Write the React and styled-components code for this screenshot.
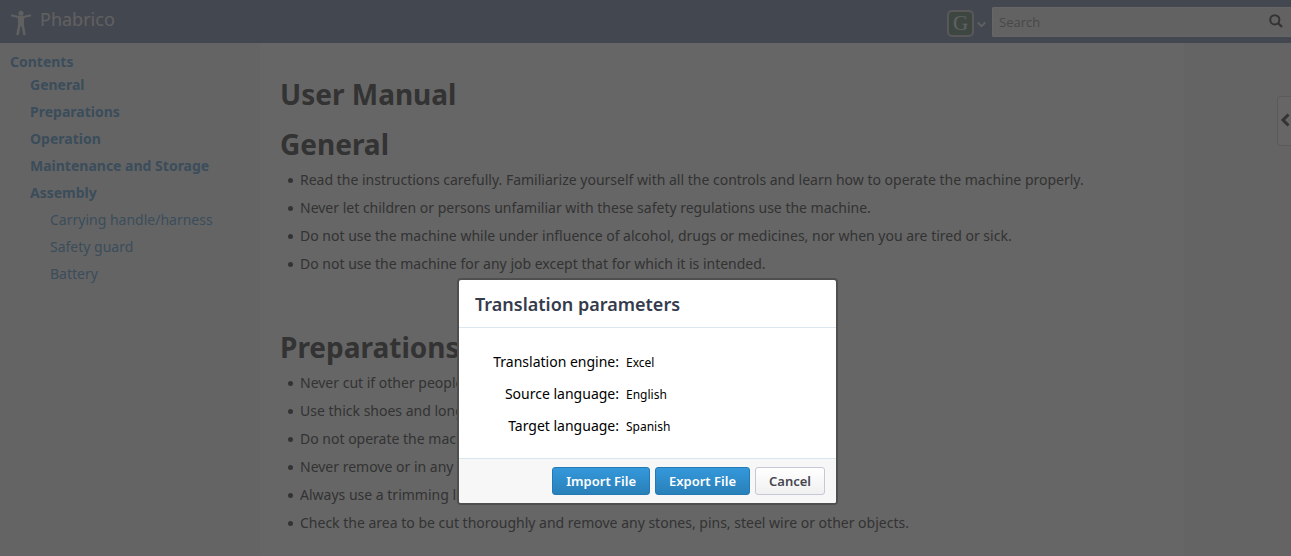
import React from 'react';
import styled, { createGlobalStyle } from 'styled-components';

const GlobalStyle = createGlobalStyle`
  *, *::before, *::after { box-sizing: border-box; }
  html, body { margin: 0; min-height: 100%; background: #fbfbfb; }
  body { overflow: hidden; font-family: "Noto Sans", sans-serif; font-size: 14px; line-height: 20px; color: #808080; }
  h1, h2, p, ul, dl, dd { margin: 0; padding: 0; }
`;

const Page = styled.div`
  display: flex;
  flex-direction: column;
  min-height: 100vh;
`;

const Header = styled.header`
  display: flex;
  align-items: flex-start;
  justify-content: space-between;
  height: 43px;
  background: #a8b2c8;
`;

const Brand = styled.a`
  display: flex;
  gap: 8px;
  padding: 7px 10px;
  color: #f0f0f0;
  font-size: 18px;
  line-height: 24px;
  text-decoration: none;
  svg { margin-top: 3px; }
`;

const Tools = styled.div`
  display: flex;
  align-items: flex-start;
`;

const Account = styled.button`
  display: flex;
  align-items: center;
  gap: 3px;
  margin-top: 10px;
  padding: 0 6px 0 0;
  border: 0;
  background: none;
  color: #f0f0f0;
  svg { margin-top: 2px; }
`;

const Avatar = styled.span`
  width: 27px;
  height: 27px;
  border: 2px solid #dcdcdc;
  border-radius: 5px;
  background: #98b0a4;
  font: 21px/23px "Liberation Serif", serif;
  text-align: center;
`;

const Search = styled.form`
  display: flex;
  width: 299px;
  height: 30px;
  margin-top: 7px;
  border: 1px solid #fff;
  border-right: 0;
  border-radius: 2px 0 0 2px;
  background: #f6f6f6;
`;

const SearchInput = styled.input`
  flex: 1;
  min-width: 0;
  padding: 0 6px;
  border: 0;
  background: none;
  font: 13px/20px "Open Sans", sans-serif;
  &::placeholder { color: #b4b4b4; opacity: 1; }
`;

const SearchButton = styled.button`
  display: flex;
  padding: 6px 8px 0 0;
  border: 0;
  background: none;
  color: #808080;
`;

const Body = styled.div`
  display: flex;
  flex: 1;
`;

const Sidebar = styled.nav`
  width: 260px;
  padding: 9px 10px;
`;

const Toc = styled.ul`
  list-style: none;
  padding-left: ${p => (p.$nested ? '20px' : '0')};
`;

const TocLink = styled.a`
  display: block;
  height: ${p => (p.$root ? '20px' : '27px')};
  padding-top: ${p => (p.$root ? '0' : '3px')};
  color: #94c0e4;
  font-weight: ${p => (p.$strong ? 700 : 400)};
  text-decoration: none;
`;

const Document = styled.main`
  flex: 1;
  min-width: 0;
  padding: 31px 20px 0;
  background: #ffffff;
`;

const Heading = styled.h1`
  margin-bottom: 10px;
  font-size: 28px;
  line-height: 40px;
`;

const SectionHeading = styled(Heading).attrs({ as: 'h2' })`
  margin-bottom: 0;
`;

const Rules = styled.ul`
  list-style: none;
  padding: 2px 0 0 8px;
  & + h2 { margin-top: 49px; }
`;

const Rule = styled.li`
  display: flex;
  align-items: center;
  gap: 7px;
  height: 28px;
  &::before {
    content: "";
    width: 5px;
    height: 5px;
    margin-top: 1px;
    border-radius: 50%;
    background: currentColor;
  }
`;

const Aside = styled.aside`
  display: flex;
  justify-content: flex-end;
  align-items: flex-start;
  width: 107px;
  padding-top: 53px;
`;

const Expander = styled.button`
  display: flex;
  align-items: center;
  width: 14px;
  height: 50px;
  padding: 0 0 2px 2px;
  border: 1px solid #e2e2e6;
  border-right: 0;
  border-radius: 4px 0 0 4px;
  background: #fff;
  color: #808080;
  svg { flex: none; }
`;

const Mask = styled.div`
  position: fixed;
  inset: 0;
  display: flex;
  justify-content: center;
  align-items: flex-start;
  padding: 278px 0 0 4px;
  background: rgba(0, 0, 0, 0.6);
`;

const Dialog = styled.section`
  width: 381px;
  border: 2px solid #4f4f4f;
  border-radius: 4px;
  background: #fff;
  color: #000;
`;

const DialogTitle = styled.h2`
  padding: 12px 16px 11px;
  border-bottom: 1px solid #dbe6ee;
  color: #353b4c;
  font-size: 18px;
  font-weight: 600;
  line-height: 24px;
`;

const Fields = styled.dl`
  display: grid;
  grid-template-columns: 160px 1fr;
  column-gap: 7px;
  row-gap: 10px;
  padding: 24px 0 20px;
  dt { text-align: right; }
  dd { font-size: 12px; line-height: 22px; }
`;

const DialogFooter = styled.footer`
  display: flex;
  justify-content: flex-end;
  gap: 5px;
  padding: 8px 11px;
  border-top: 1px solid #d7e7ee;
  border-radius: 0 0 2px 2px;
  background: #f7f7f7;
`;

const Button = styled.button`
  height: 28px;
  padding: 0 13px;
  border: 1px solid ${p => (p.$primary ? '#2279b5' : '#c5c8d8')};
  border-radius: 3px;
  background: ${p => (p.$primary ? 'linear-gradient(#3498db, #2980b9)' : 'linear-gradient(#ffffff, #f1f0f1)')};
  color: ${p => (p.$primary ? '#fff' : '#464650')};
  font: 600 13px/20px "Noto Sans", sans-serif;
`;

const generalRules = [
  'Read the instructions carefully. Familiarize yourself with all the controls and learn how to operate the machine properly.',
  'Never let children or persons unfamiliar with these safety regulations use the machine.',
  'Do not use the machine while under influence of alcohol, drugs or medicines, nor when you are tired or sick.',
  'Do not use the machine for any job except that for which it is intended.',
];

const preparationRules = [
  'Never cut if other people, especially children, or pets are nearby.',
  'Use thick shoes and long trousers.',
  'Do not operate the machine when barefoot or wearing open sandals.',
  'Never remove or in any way modify the safety devices.',
  'Always use a trimming line of the specified type.',
  'Check the area to be cut thoroughly and remove any stones, pins, steel wire or other objects.',
];

const parameters = [
  ['Translation engine:', 'Excel'],
  ['Source language:', 'English'],
  ['Target language:', 'Spanish'],
];

const LogoIcon = () => (
  <svg width="22" height="26" viewBox="0 0 22 26" fill="none" stroke="currentColor" strokeLinecap="round" aria-hidden="true">
    <circle cx="11" cy="3.200" r="2.500" fill="currentColor" stroke="none" />
    <path d="M2 5.500 8.500 7h5L20 5.500" strokeWidth="2.300" strokeLinejoin="round" />
    <path d="M7.800 6.500h6.400l-.4 10H8.200z" fill="currentColor" stroke="none" />
    <path d="M9.500 14 7.700 24M12.500 14l1.800 10" strokeWidth="2.600" />
  </svg>
);

const ChevronDownIcon = () => (
  <svg width="9" height="7" viewBox="0 0 9 7" fill="none" stroke="currentColor" strokeWidth="1.800" aria-hidden="true">
    <path d="M.8 1.500 4.500 5.200 8.200 1.500" />
  </svg>
);

const SearchIcon = () => (
  <svg width="14" height="14" viewBox="0 0 14 14" fill="none" stroke="currentColor" strokeWidth="2" aria-hidden="true">
    <circle cx="5.800" cy="5.800" r="4.600" />
    <path d="m9 9 4 4" strokeWidth="2.400" />
  </svg>
);

const ChevronLeftIcon = () => (
  <svg width="10" height="14" viewBox="0 0 10 14" fill="none" stroke="currentColor" strokeWidth="3" aria-hidden="true">
    <path d="M8.500 1.500 3 7l5.500 5.500" />
  </svg>
);

const RuleList = ({ items }) => (
  <Rules>{items.map(item => <Rule key={item}>{item}</Rule>)}</Rules>
);

export default function App() {
  return (
    <>
      <GlobalStyle />
      <Page>
        <Header>
          <Brand href="#"><LogoIcon />Phabrico</Brand>
          <Tools>
            <Account type="button" aria-label="Account"><Avatar>G</Avatar><ChevronDownIcon /></Account>
            <Search>
              <SearchInput type="search" placeholder="Search" aria-label="Search" />
              <SearchButton type="button" aria-label="Search"><SearchIcon /></SearchButton>
            </Search>
          </Tools>
        </Header>
        <Body>
          <Sidebar>
            <TocLink href="#" $root $strong>Contents</TocLink>
            <Toc $nested>
              <li><TocLink href="#general" $strong>General</TocLink></li>
              <li><TocLink href="#preparations" $strong>Preparations</TocLink></li>
              <li><TocLink href="#operation" $strong>Operation</TocLink></li>
              <li><TocLink href="#maintenance" $strong>Maintenance and Storage</TocLink></li>
              <li>
                <TocLink href="#assembly" $strong>Assembly</TocLink>
                <Toc $nested>
                  <li><TocLink href="#handle">Carrying handle/harness</TocLink></li>
                  <li><TocLink href="#guard">Safety guard</TocLink></li>
                  <li><TocLink href="#battery">Battery</TocLink></li>
                </Toc>
              </li>
            </Toc>
          </Sidebar>
          <Document>
            <Heading>User Manual</Heading>
            <SectionHeading id="general">General</SectionHeading>
            <RuleList items={generalRules} />
            <SectionHeading id="preparations">Preparations</SectionHeading>
            <RuleList items={preparationRules} />
          </Document>
          <Aside>
            <Expander type="button" aria-label="Show panel"><ChevronLeftIcon /></Expander>
          </Aside>
        </Body>
      </Page>
      <Mask>
        <Dialog role="dialog" aria-modal="true" aria-labelledby="dialog-title">
          <DialogTitle id="dialog-title">Translation parameters</DialogTitle>
          <Fields>
            {parameters.map(([label, value]) => (
              <React.Fragment key={label}>
                <dt>{label}</dt>
                <dd>{value}</dd>
              </React.Fragment>
            ))}
          </Fields>
          <DialogFooter>
            <Button type="button" $primary>Import File</Button>
            <Button type="button" $primary>Export File</Button>
            <Button type="button">Cancel</Button>
          </DialogFooter>
        </Dialog>
      </Mask>
    </>
  );
}
